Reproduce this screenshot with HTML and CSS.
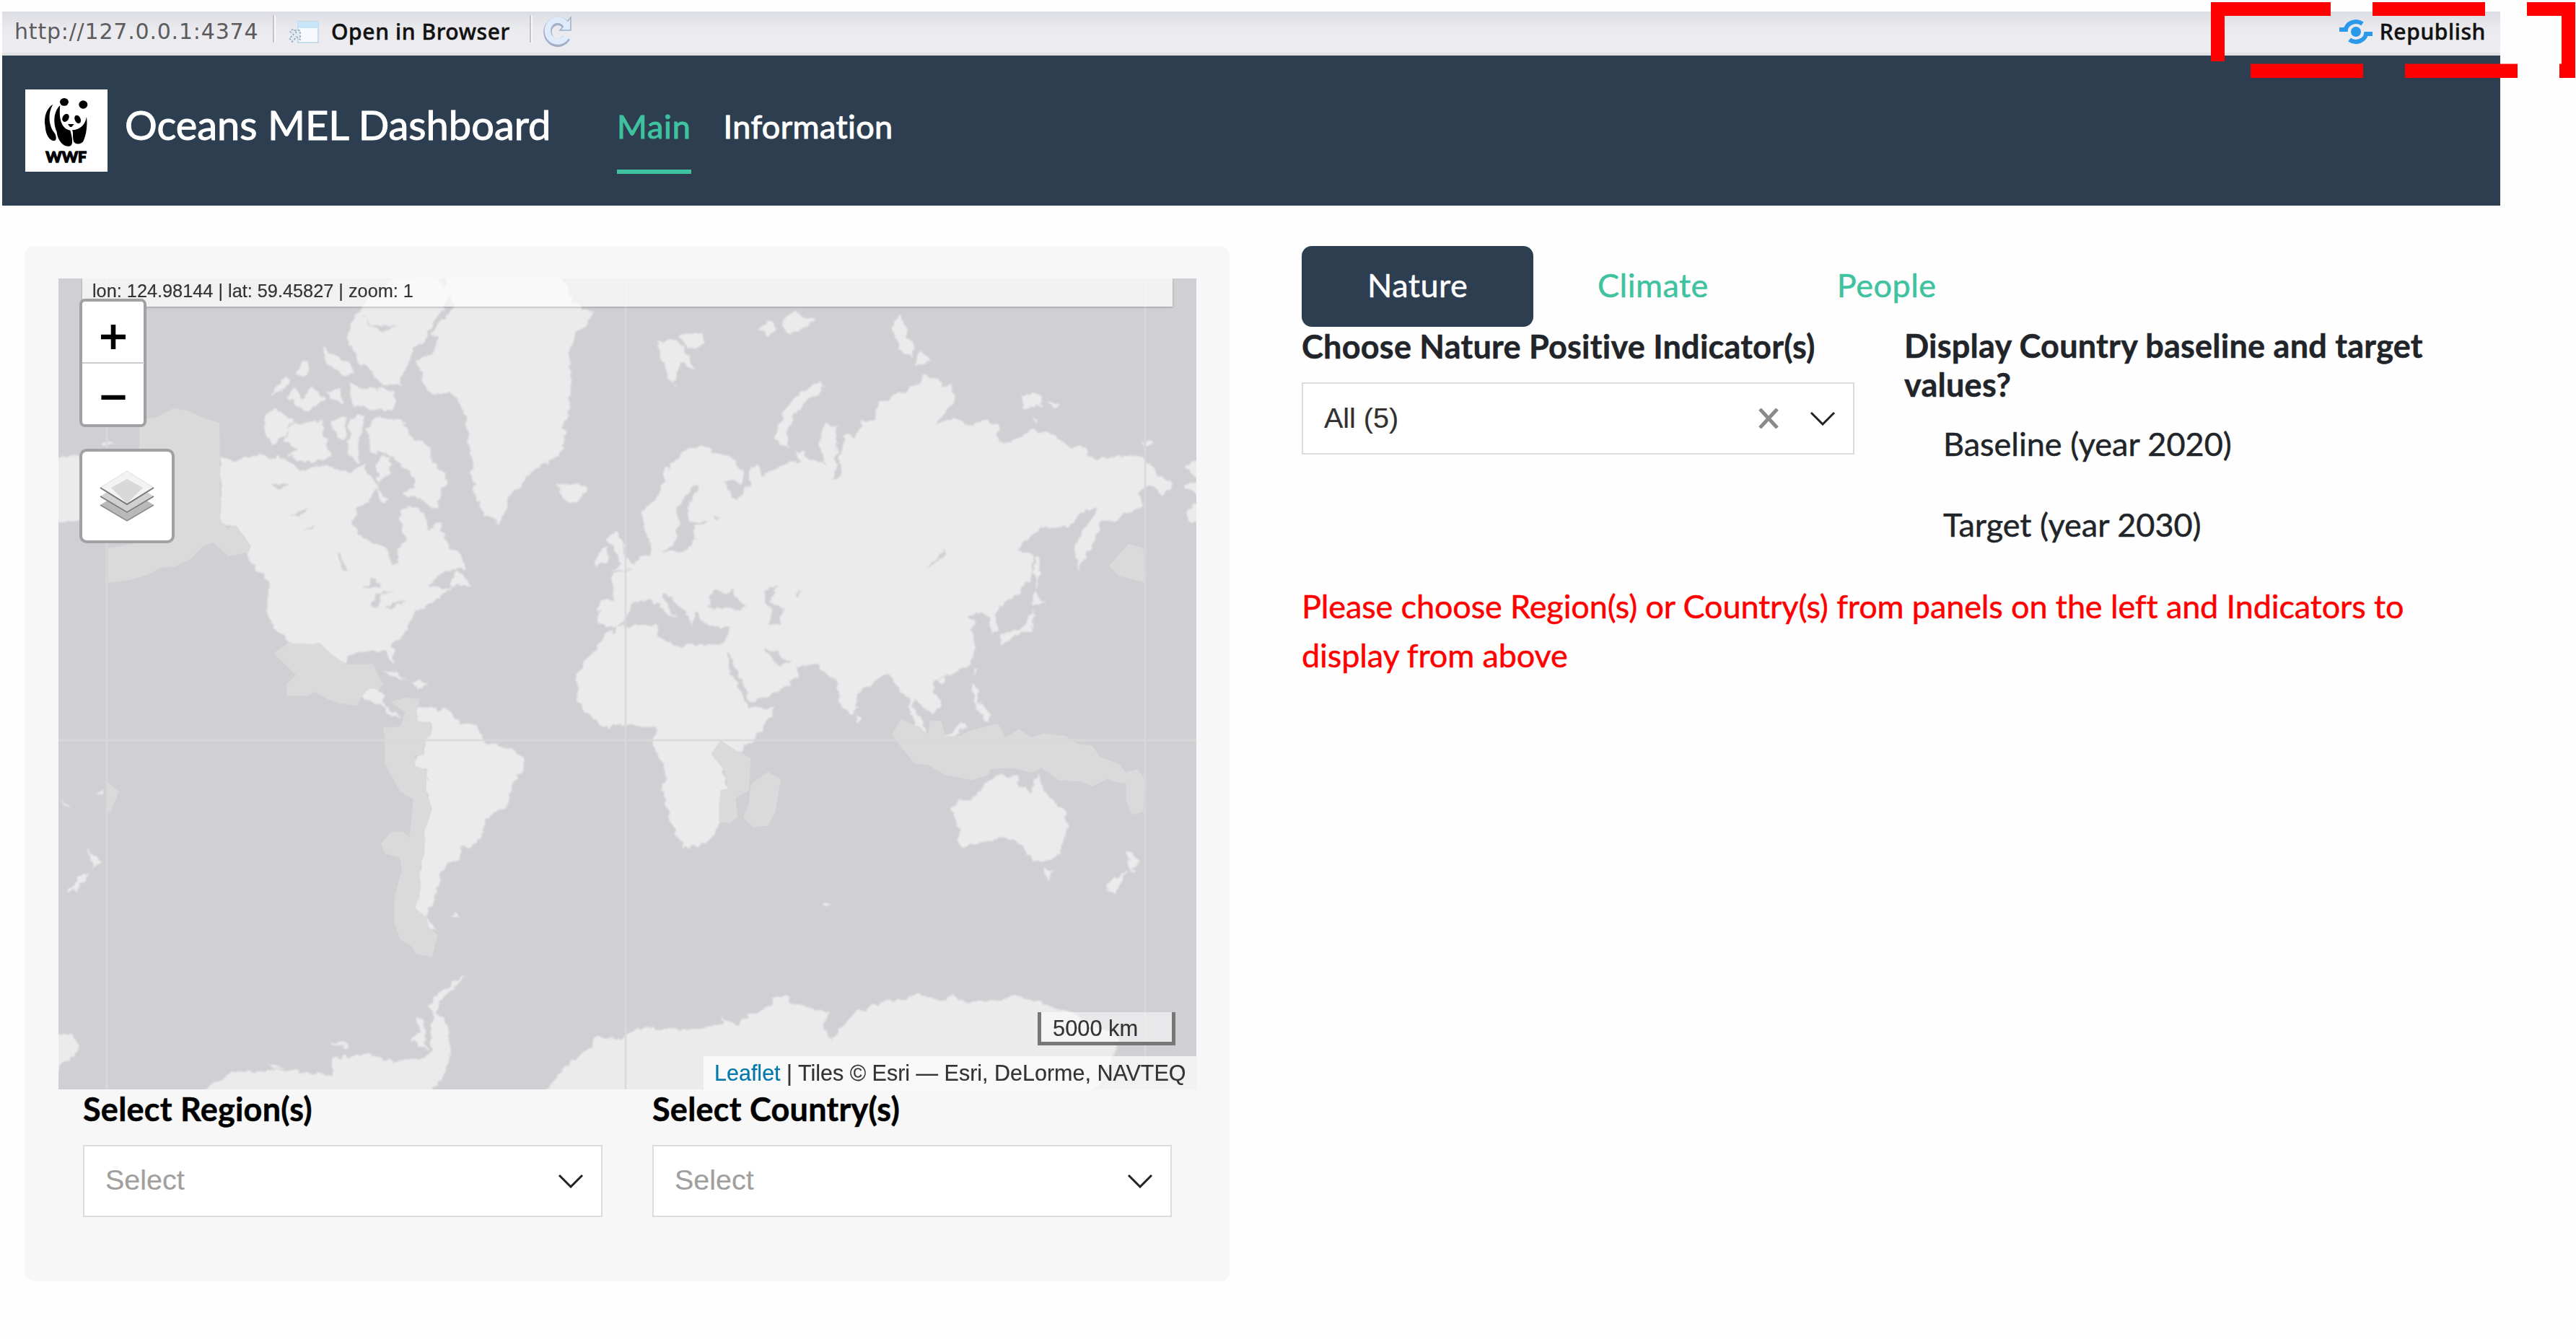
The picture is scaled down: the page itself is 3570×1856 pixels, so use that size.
FILE: index.html
```html
<!DOCTYPE html>
<html lang="en">
<head>
<meta charset="utf-8">
<title>Oceans MEL Dashboard</title>
<link rel="stylesheet" href="styles.css">
</head>
<body>
<div class="toolbar">
  <span class="url">http://127.0.0.1:4374</span>
  <span class="sep sep-first"></span>
  <svg class="open-icon" width="44" height="34" viewBox="0 0 44 34"><rect x="13" y="2" width="28" height="29" fill="#f6f9fd" stroke="#b9d3e6" stroke-width="1.5"/><rect x="13" y="2" width="28" height="9" fill="#c9e5fa"/><path d="M6 12l-4 4 5 4-6 5 4 5 6-7 5 4V14H8l3 4" fill="#e3e8ee" stroke="#8fa9ba" stroke-width="1.5" stroke-dasharray="3 2"/></svg>
  <span class="tool-label open-label">Open in Browser</span>
  <span class="sep sep-second"></span>
  <svg class="reload" width="44" height="46" viewBox="0 0 44 46"><path d="M32 14A14 15 0 1 0 33 31" fill="none" stroke="#a3afc6" stroke-width="11.500"/><path d="M39 3v18H24z" fill="#dfeafb" stroke="#a3afc6" stroke-width="1.5"/><path d="M33 14A14 15 0 1 0 32.500 30" fill="none" stroke="#dfeafb" stroke-width="8.500"/></svg>
  <svg class="publish-icon" width="48" height="38" viewBox="0 0 48 38"><g fill="none" stroke="#2a99ea" stroke-width="6"><path d="M1 16h9c1-8 13-15 23-8"/><path d="M47 22h-9c-1 8-13 15-23 8"/></g><circle cx="24" cy="19" r="7" fill="#2a99ea"/></svg>
  <span class="tool-label">Republish</span>
</div>
<header class="navbar">
  <svg class="logo" width="114" height="114" viewBox="0 0 114 114">
    <rect width="114" height="114" fill="#fff"/>
    <g transform="translate(-15 -15.300) scale(.3333)">
      <path d="M160 108C135 122 120 160 128 200C130 235 145 258 165 260C176 258 176 240 166 226C145 200 136 150 160 108Z"/>
      <path d="M190 112C160 140 162 190 176 222C180 262 205 285 228 282C246 280 242 250 232 216C206 212 182 186 190 112Z"/>
      <path d="M300 160C304 190 300 235 286 262C276 276 252 276 246 262C240 240 246 225 240 215C270 215 294 195 300 160Z"/>
      <ellipse cx="207" cy="98" rx="18" ry="16"/><ellipse cx="286" cy="109" rx="18" ry="17"/>
      <ellipse cx="213" cy="164" rx="13" ry="18" transform="rotate(30 213 164)"/><ellipse cx="263" cy="170" rx="12" ry="18" transform="rotate(-25 263 170)"/>
      <path d="M222 190h26l-10 12h-7z"/>
      <text class="logo-text" x="130" y="348" textLength="170" lengthAdjust="spacingAndGlyphs">WWF</text>
    </g>
  </svg>
  <span class="brand">Oceans MEL Dashboard</span>
  <nav class="nav"><a class="nav-item active">Main</a><a class="nav-item info">Information</a></nav>
</header>
<main class="content">
  <section class="card">
    <div class="map">
      <svg class="map-art" width="1577" height="1124" viewBox="0 0 1577 1124">
        <defs>
          <filter id="coast" x="-2%" y="-2%" width="104%" height="104%"><feTurbulence type="fractalNoise" baseFrequency=".09" numOctaves="2" seed="4"/><feDisplacementMap in="SourceGraphic" scale="12" xChannelSelector="R" yChannelSelector="G"/><feGaussianBlur stdDeviation="1"/></filter>
        </defs>
        <rect width="1577" height="1124" fill="#d0cfd4"/>
        <g filter="url(#coast)">
          <g fill="#ebebeb">
            <g transform="translate(-21 -16.500) scale(.523 .3827)">
              <path d="M1080 20L1360 20 1390 80 1400 130 1455 165 1440 210 1410 240 1400 290 1390 330 1400 410 1395 500 1380 560 1380 640 1365 690 1300 740 1260 800 1235 820 1225 880 1210 930 1190 905 1170 905 1145 830 1135 770 1135 700 1125 650 1125 590 1110 520 1095 475 1070 455 1025 460 1000 410 1010 380 985 350 1030 310 1050 260 1030 240 1060 190 1090 140 1060 80Z"/>
              <path d="M840 150L880 100 930 40 1040 40 1075 100 1065 150 1030 210 1010 270 980 300 970 340 950 400 945 430 900 430 870 380 840 350 820 300 805 260 820 200Z"/>
              <path d="M810 420L850 440 930 450 935 500 920 520 870 520 840 500 820 510ZM740 295L770 320 800 340 825 390 800 395 770 370 750 345ZM670 390L690 340 710 335 700 390 680 400ZM605 460L640 400 660 400 630 455ZM645 470L665 440 690 480 710 430 745 480 720 505 690 525 670 505ZM755 455L790 440 800 500 760 480ZM590 525L620 520 660 550 650 590 610 640 585 600ZM640 610L660 570 740 560 745 620 765 690 710 710 680 700 650 680 670 660 640 630ZM760 555L800 545 800 630 780 620ZM810 545L855 540 835 640 845 710 810 690Z"/>
              <path d="M860 590L880 550 950 555 970 610 1020 650 1030 700 1075 770 1055 810 1045 885 1000 840 950 825 985 800 970 740 920 680 865 670ZM890 690L915 690 920 745 890 780 880 730ZM880 800L920 850 900 855Z"/>
              <path d="M468 690L500 710 570 680 640 695 680 740 760 720 800 745 850 720 870 760 890 800 865 850 830 880 820 930 845 985 910 1020 925 1080 940 1080 940 1020 960 990 945 920 950 875 990 870 1010 900 1020 950 1050 930 1060 970 1080 1020 1115 1050 1115 1090 1050 1110 1020 1160 1070 1160 1100 1100 1140 1160 1100 1150 1050 1200 1000 1240 970 1280 965 1320 925 1370 930 1440 905 1390 850 1395 810 1410 800 1440 750 1400 730 1370 690 1370 650 1360 610 1310 595 1250 597 1130 560 1090 530 1020 500 940 470 930Z"/>
              <path d="M10 690L90 685 110 700 110 920 60 925 10 930ZM157 640L172 628 188 638 172 650ZM1360 785L1410 785 1440 800 1420 845 1395 858 1370 825ZM1495 990L1515 950 1530 990 1545 1050 1568 1090 1500 1105 1530 1080ZM1470 1035L1495 1020 1495 1070 1465 1085ZM1510 1130L1580 1110 1580 1260 1540 1205ZM1475 1210L1540 1210 1545 1260 1530 1300 1490 1305 1470 1290ZM900 1465L930 1467 972 1502 940 1490ZM975 1515L1000 1498 1018 1515 990 1527ZM840 1556L862 1526 900 1550 905 1596 950 1630 920 1631 890 1586 860 1571Z"/>
              <path d="M1580 1306L1495 1320 1470 1380 1430 1430 1415 1490 1416 1570 1440 1616 1485 1668 1580 1658Z"/>
            </g>
            <g transform="translate(-21 563.500) scale(.523 .3827)">
              <path d="M985 100L1010 75 1075 95 1105 135 1150 145 1165 205 1250 240 1278 270 1270 310 1248 345 1230 440 1175 480 1165 530 1130 590 1105 590 1105 630 1065 650 1040 730 1035 780 1015 835 1040 890 1020 880 1010 840 985 810 1000 740 995 680 1010 600 1005 530 1030 450 1015 390 1015 310 980 290 985 250 1010 250 1010 190 1030 180 1025 135 990 130Z"/>
              <path d="M410 1480L510 1400 640 1395 770 1415 765 1350 860 1335 930 1365 1000 1350 1030 1330 1025 1250 1035 1180 1020 1160 1060 1100 1120 1050 1100 1080 1050 1140 1045 1190 1070 1230 1080 1340 1060 1420 1015 1480ZM985 1210L1005 1205 1020 1320 970 1290 1000 1260ZM760 1300L800 1295 812 1320ZM578 1340L600 1375 640 1385 610 1395ZM1325 1480L1400 1360 1450 1320 1460 1275 1540 1285 1590 1240 1590 1480ZM10 1250L80 1270 95 1310 80 1350 50 1370 40 1400 10 1480Z"/>
              <path d="M115 592L155 635 132 678 130 640ZM122 668L92 750 65 742ZM1078 833L1090 825 1102 833 1090 843ZM48 415L70 440 55 438ZM145 390L155 380 158 395Z"/>
            </g>
            <g transform="translate(779 -16.500) scale(.523 .3827)">
              <path d="M-20 1110L30 1095 50 1055 80 1040 80 990 65 965 55 890 100 830 120 740 160 680 215 645 250 670 310 710 330 760 320 785 270 775 290 820 310 850 340 790 345 730 365 725 375 760 430 715 480 705 460 660 520 700 540 720 525 640 545 570 570 580 575 690 600 600 620 620 640 560 675 550 680 500 740 460 790 430 800 390 820 400 875 435 885 470 870 520 835 570 880 555 930 575 965 555 1000 575 1005 640 1050 625 1090 590 1150 610 1180 650 1230 655 1240 690 1310 690 1350 680 1390 700 1430 760 1465 790 1440 825 1400 790 1370 820 1385 870 1350 890 1310 925 1270 925 1255 1000 1215 1095 1205 1040 1210 980 1240 930 1265 875 1220 890 1190 945 1110 945 1050 1025 1090 1045 1095 1110 1060 1180 1020 1220 990 1260 1000 1320 985 1325 970 1260 945 1255 915 1275 945 1290 930 1320 945 1380 930 1430 900 1465 850 1490 828 1500 830 1540 850 1568 850 1590 820 1620 800 1590 780 1565 778 1600 800 1650 810 1695 785 1670 770 1620 765 1560 740 1545 735 1520 715 1480 690 1485 630 1545 625 1600 605 1628 585 1580 570 1490 555 1490 525 1445 460 1440 470 1480 440 1520 345 1582 350 1600 408 1590 390 1650 350 1710 310 1765 270 1826 285 1896 265 1920 265 2006 245 2066 215 2096 165 2106 130 1996 108 1896 120 1836 85 1726 90 1668 55 1668 45 1650 -20 1668Z"/>
              <path d="M100 270L150 270 185 330 200 385 160 350 140 430 120 380 105 330ZM160 245L220 240 220 280 205 302 170 285ZM360 225L400 200 410 230 390 250ZM430 200L460 160 490 190 515 185 500 215 450 245 435 230ZM410 620L430 540 460 470 530 415 540 440 480 500 455 550 440 600 450 655 420 645ZM722 220L740 178 760 220 755 255 775 265 775 325 740 300 730 260ZM780 365L795 300 820 340ZM1060 460L1110 465 1120 500 1070 515ZM1130 485L1165 500 1150 512ZM1090 540L1105 560 1100 572ZM1378 638L1393 628 1410 638 1393 652ZM1098 1045L1106 1050 1112 1110 1104 1170 1098 1110ZM1095 1180L1125 1210 1090 1225ZM1090 1240L1100 1260 1085 1320 1040 1340 1010 1370 1008 1330 1060 1310 1080 1280ZM935 1450L945 1455 938 1480ZM1560 670L1495 720 1525 765 1560 770ZM1488 790L1525 780 1560 780 1560 830 1525 825ZM1560 855L1525 860 1500 880 1505 925 1560 935ZM842 1495L862 1492 850 1520Z"/>
            </g>
            <g transform="translate(779 563.500) scale(.523 .3827)">
              <path d="M880 450L900 420 945 410 965 350 1010 325 1055 335 1050 360 1090 390 1105 320 1120 380 1180 465 1187 520 1160 620 1140 635 1090 635 1055 570 1020 550 960 570 900 592 895 520ZM1120 670L1147 670 1135 710ZM1340 592L1375 635 1355 680 1348 650ZM1343 670L1310 752 1285 745 1310 700ZM930 0L945 5 950 60 980 110 975 135 958 125 940 50ZM622 95L640 120 632 138ZM860 190L900 140 920 145 880 192ZM535 795L545 788 552 796 545 803Z"/>
              <path d="M-20 1290L10 1280 40 1245 200 1250 275 1225 270 1200 310 1235 330 1200 400 1160 405 1130 440 1125 460 1155 550 1185 540 1240 560 1285 620 1190 700 1145 770 1135 790 1120 850 1145 880 1125 910 1150 1000 1145 1045 1125 1130 1160 1200 1190 1320 1270 1310 1345 1250 1480 -20 1480Z"/>
            </g>
          </g>
          <g fill="#d0cfd4">
            <g transform="translate(-21 -16.500) scale(.523 .3827)"><path d="M600 780L650 785 625 812ZM655 905L705 868 680 905ZM695 950L722 935 710 950ZM778 1042L790 1045 806 1105 795 1095ZM845 1162L878 1132 900 1162ZM872 1235L880 1180 892 1180 935 1175 900 1185 885 1235ZM900 1235L960 1205 930 1235ZM1030 1150L1075 1115 1080 1170 1050 1160ZM850 180L870 215 940 215 900 235 865 215Z"/></g>
            <g transform="translate(779 -16.500) scale(.523 .3827)"><path d="M-20 1340L40 1215 85 1205 125 1260 148 1272 110 1200 115 1180 160 1235 190 1300 200 1250 225 1290 260 1305 290 1305 275 1370 190 1365 160 1380 100 1335 95 1300 40 1300 -20 1312ZM230 1240L240 1180 260 1165 275 1185 305 1160 300 1190 335 1235 310 1245 280 1235ZM378 1180L415 1160 395 1200 430 1240 425 1300 395 1295 400 1250ZM275 1405L287 1405 352 1600 342 1600 310 1520ZM385 1385L397 1388 450 1430 420 1450ZM150 880L190 795 208 800 180 870 180 930 240 920 190 940 200 980 175 1030 110 1035 150 980ZM570 580L578 690 585 740 565 782 572 700ZM810 1088L845 1050 855 1012 855 1045 830 1080ZM465 1180L480 1170 472 1200ZM245 900L265 905 250 920Z"/></g>
          </g>
        </g>
        <g fill="#dadada">
          <g transform="translate(-21 -16.500) scale(.523 .3827)"><path d="M255 555L300 545 345 513 380 520 430 550 467 565 468 920 490 948 510 935 550 1010 545 1035 490 1048 450 1000 425 1010 390 1060 345 1088 310 1090 280 1115 230 1135 172 1145 172 1020 255 1000ZM610 1400L650 1362 700 1370 735 1365 760 1400 800 1440 875 1440 890 1490 900 1510 890 1530 862 1526 845 1556 830 1590 780 1580 750 1565 720 1540 700 1555 645 1555 645 1510 670 1480Z"/></g>
          <g transform="translate(-21 563.500) scale(.523 .3827)"><path d="M920 60L960 45 1000 50 990 80 990 130 1025 135 1028 180 1010 195 1010 250 985 255 985 295 1015 310 1015 390 1030 450 1010 530 1010 600 995 680 1000 740 985 810 1015 840 1022 880 1045 905 1030 985 990 975 975 945 945 920 930 860 930 770 950 670 945 625 905 610 895 575 920 533 950 530 970 550 980 415 945 385 905 285 905 190 900 155 945 150 960 100ZM168 350L200 385 180 455 168 460Z"/></g>
          <g transform="translate(779 -16.500) scale(.523 .3827)"><path d="M1295 1085L1345 1005 1385 1020 1391 1145 1320 1120Z"/></g>
          <g transform="translate(779 563.500) scale(.523 .3827)"><path d="M720 175L745 122 790 155 815 175 820 130 850 130 860 185 900 185 925 165 1000 140 1020 190 1055 160 1090 190 1120 175 1180 185 1210 212 1250 220 1270 260 1320 285 1340 320 1340 358 1310 350 1290 340 1250 368 1220 350 1160 345 1115 300 1090 318 1040 300 980 305 975 325 930 345 860 325 815 290 780 285 740 220ZM1340 315L1370 305 1390 345 1385 460 1355 470 1340 420ZM240 250L265 200 305 235 345 265 340 380 305 410 310 480 290 500 260 495 265 380 285 375 275 310ZM345 360L390 315 425 340 410 460 390 510 350 515 325 480 340 430Z"/></g>
        </g>
        <path d="M67 0V1124M786 0V1124M1506 0V1124M0 640H1577" stroke="#d9d9d9" stroke-width="3" opacity=".8"/>
      </svg>
      <div class="coords">lon: 124.98144 | lat: 59.45827 | zoom: 1</div>
      <div class="zoom">
        <svg width="86" height="84" viewBox="0 0 86 84"><path d="M26 49h34M43 32v34" stroke="#000" stroke-width="6.500"/></svg>
        <svg class="minus" width="86" height="85" viewBox="0 0 86 85"><path d="M26 48h34" stroke="#000" stroke-width="6.500"/></svg>
      </div>
      <div class="layers"><svg width="76" height="72" viewBox="0 0 76 72"><path d="M1 48L38 24 75 48 38 70Z" fill="#b9b9b9"/><path d="M1 48L38 70 75 48" fill="none" stroke="#8a8a8a" stroke-width="1.500"/><path d="M1 36L38 12 75 36 38 58Z" fill="#d0d0d0"/><path d="M1 36L38 58 75 36" fill="none" stroke="#777" stroke-width="1.500"/><path d="M1 24L38 1 75 24 38 47Z" fill="#f3f3f3" stroke="#ddd"/><path d="M16 24L38 12 60 24 38 46Z" fill="#d8d8d8"/><path d="M1 24L38 47 75 24" fill="none" stroke="#777" stroke-width="2"/></svg></div>
      <div class="scale">5000 km</div>
      <div class="attribution"><a>Leaflet</a> | Tiles © Esri — Esri, DeLorme, NAVTEQ</div>
    </div>
    <div class="selectors">
      <div><label>Select Region(s)</label><div class="dropdown placeholder"><span>Select</span><svg class="chev" width="36" height="20" viewBox="0 0 36 20"><path d="M2 2l16 16L34 2"/></svg></div></div>
      <div><label>Select Country(s)</label><div class="dropdown placeholder"><span>Select</span><svg class="chev" width="36" height="20" viewBox="0 0 36 20"><path d="M2 2l16 16L34 2"/></svg></div></div>
    </div>
  </section>
  <section class="panel">
    <div class="tabs"><a class="tab tab-active">Nature</a><a class="tab">Climate</a><a class="tab">People</a></div>
    <div class="filters">
      <div><label>Choose Nature Positive Indicator(s)</label><div class="dropdown"><span>All (5)</span><svg class="clear" width="30" height="28" viewBox="0 0 30 28"><path d="M3 1l24 26M27 1L3 27"/></svg><svg class="chev" width="36" height="20" viewBox="0 0 36 20"><path d="M2 2l16 16L34 2"/></svg></div></div>
      <div class="display"><label>Display Country baseline and target values?</label><p class="option">Baseline (year 2020)</p><p class="option">Target (year 2030)</p></div>
    </div>
    <p class="notice">Please choose Region(s) or Country(s) from panels on the left and Indicators to display from above</p>
  </section>
</main>
<svg class="callout" width="506" height="105" viewBox="0 0 506 105"><path fill="#f00" d="M0 0H166V19H19V82H0ZM224 0H380V19H224ZM438 0H505V105H483V85.500H486V19H438ZM55 85.500H211V105H55ZM269 85.500H425V105H269Z"/></svg>
</body>
</html>
```
FILE: styles.css
```css
* { box-sizing: border-box; }
body { margin: 0; width: 3570px; height: 1856px; overflow: hidden; background: #fefefe; font-family: "Lato", sans-serif; font-size: 45px; color: #212529; position: relative; padding-top: 16px; -webkit-text-stroke: .5px; }
p { margin: 0; }
.toolbar { width: 3462px; height: 61px; margin-left: 3px; padding-left: 17px; padding-right: 20px; display: flex; align-items: flex-start; background: linear-gradient(#dcdde2, #ebebef 45%, #ededf1); border-bottom: 4px solid #dfe1e4; font-family: "Noto Sans", "Open Sans", sans-serif; font-size: 30px; line-height: 55px; white-space: nowrap; letter-spacing: .6px; }
.url { width: 336px; color: #5c5c5e; font-family: "DejaVu Sans", sans-serif; letter-spacing: .8px; -webkit-text-stroke: 0; }
.sep { width: 4px; height: 38px; margin-top: 5px; border-left: 2px solid #c3c4c9; border-right: 2px solid #f8f8fa; }
.sep-first { margin-left: 22px; }
.open-icon { margin: 12px 15px 0 18px; }
.tool-label { color: #111; font-weight: 500; }
.open-label { width: 249px; }
.sep-second { margin-left: 26px; }
.reload { margin: 5px 0 0 14px; }
.publish-icon { margin: 9px 9px 0 auto; }
.navbar { width: 3462px; height: 208px; margin-left: 3px; padding-left: 32px; display: flex; align-items: center; background: #2c3e50; color: #fff; white-space: nowrap; -webkit-text-stroke: 1px; }
.logo { display: block; }
.logo-text { font: 900 64px "Lato", sans-serif; stroke: #000; stroke-width: 4px; }
.brand { margin: 0 0 17px 24px; width: 682px; font-size: 56px; line-height: 66px; }
.nav { display: flex; gap: 45px; height: 93px; margin-top: 26px; }
.nav-item { line-height: 54px; padding-bottom: 33px; height: 93px; letter-spacing: .4px; }
.nav-item.active { color: #3fc29f; border-bottom: 6px solid #3fc29f; letter-spacing: .8px; }
.content { display: flex; align-items: flex-start; padding: 56px 0 0 34px; }
.card { width: 1670px; height: 1435px; padding: 45px 46px 0 47px; background: #f7f7f7; border-radius: 14px; color: #000; }
.map { position: relative; width: 1577px; height: 1124px; overflow: hidden; font-family: "Liberation Sans", Arial, sans-serif; color: #333; white-space: nowrap; -webkit-text-stroke: .2px; }
.map-art { display: block; }
.coords { position: absolute; left: 33px; top: 0; width: 1511px; height: 39px; padding-left: 14px; background: rgba(255,255,255,.7); box-shadow: 0 1px 3px rgba(0,0,0,.25); font-size: 25.300px; line-height: 35px; }
.zoom { position: absolute; left: 29px; top: 28px; width: 93px; height: 178px; border: 4px solid #a1a0a4; border-radius: 8px; background: #fff; }
.zoom svg { display: block; }
.minus { border-top: 2px solid #ccc; }
.layers { position: absolute; left: 29px; top: 236px; width: 132px; height: 131px; padding: 26px 0 0 24px; border: 4px solid #a1a0a4; border-radius: 10px; background: #fff; }
.layers svg { display: block; }
.scale { position: absolute; left: 1357px; top: 1017px; width: 191px; height: 46px; padding-left: 16px; border: 5px solid #777; border-top: 0; background: rgba(255,255,255,.5); font-size: 30.800px; line-height: 45px; }
.attribution { position: absolute; left: 894px; top: 1078px; width: 683px; height: 46px; padding-left: 15px; background: rgba(255,255,255,.7); font-size: 30.500px; line-height: 46px; }
.attribution a { color: #0078a8; }
.selectors { display: grid; grid-template-columns: 720px 720px; gap: 69px; padding-left: 34px; }
label { display: block; font-weight: 700; font-size: 45px; line-height: 54px; white-space: nowrap; letter-spacing: .25px; }
.dropdown { display: flex; align-items: center; height: 100px; margin-top: 23px; padding: 0 24px 0 29px; border: 2px solid #dcdcdc; background: #fff; color: #323130; font-family: "Liberation Sans", Arial, sans-serif; font-size: 39.500px; -webkit-text-stroke: .2px; }
.dropdown span { flex: 1; line-height: 46px; padding-bottom: 3px; }
.placeholder { color: #a19f9d; }
.placeholder span { padding-bottom: 5px; }
.chev, .clear { fill: none; stroke: #222; stroke-width: 3; }
.clear { stroke: #8a8a8a; stroke-width: 5; margin-right: 42px; }
.panel { margin-left: 100px; width: 1600px; }
.tabs { display: flex; height: 112px; gap: 0; }
.tab { color: #3fc29f; padding: 0 90px 0 89px; line-height: 108px; letter-spacing: .5px; }
.tab:last-child { padding-left: 88px; }
.tab-active { background: #2c3e50; color: #fff; border-radius: 14px; padding: 0 91px; width: 321px; }
.filters { display: grid; grid-template-columns: 766px 760px; gap: 69px; }
.display label { white-space: normal; line-height: 53.500px; }
.option { padding-left: 54px; line-height: 68px; margin: 21px 0 44px; }
.option + .option { margin: 0; }
.notice { margin-top: 45px; width: 1560px; line-height: 68px; color: #f00; letter-spacing: -.12px; }
.callout { position: absolute; left: 3064px; top: 3px; }
```
